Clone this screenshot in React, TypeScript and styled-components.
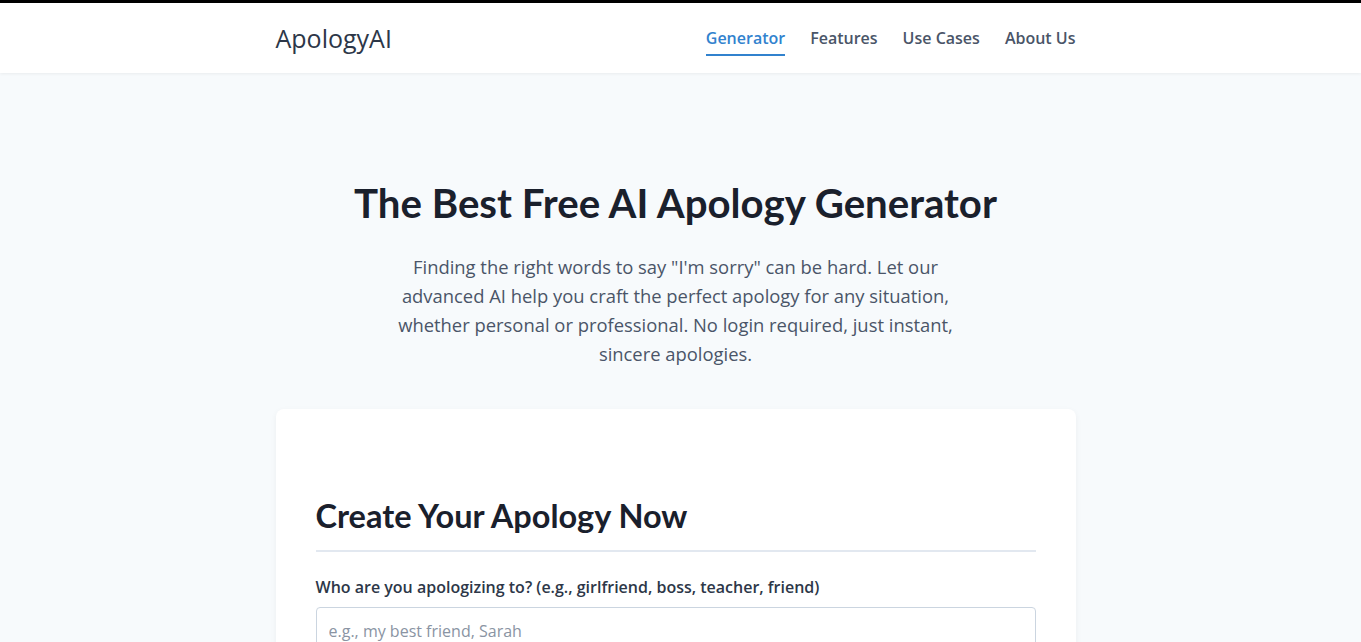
import styled, { createGlobalStyle } from "styled-components";

const GlobalStyle = createGlobalStyle`
    * { box-sizing: border-box; }
    html, body {
        margin: 0;
        padding: 0;
        background: #f7fafc;
        font-family: "Open Sans", "Liberation Sans", sans-serif;
        color: #2d3748;
    }
`;

const navItems = ["Generator", "Features", "Use Cases", "About Us"];

const App = () => {
    return (
        <Page>
            <GlobalStyle/>
            <TopStrip/>
            <Header>
                <Container>
                    <HeaderRow>
                        <Logo>ApologyAI</Logo>
                        <Nav>
                            {navItems.map((item, i) => (
                                <NavLink key={item} isActive={i === 0}>{item}</NavLink>
                            ))}
                        </Nav>
                    </HeaderRow>
                </Container>
            </Header>

            <Main>
                <Container>
                    <Hero>
                        <HeroTitle>The Best Free AI Apology Generator</HeroTitle>
                        <HeroText>
                            Finding the right words to say "I'm sorry" can be hard. Let our advanced AI help
                            you craft the perfect apology for any situation, whether personal or professional.
                            No login required, just instant, sincere apologies.
                        </HeroText>
                    </Hero>

                    <Card>
                        <CardTitle>Create Your Apology Now</CardTitle>
                        <Field>
                            <Label>Who are you apologizing to? (e.g., girlfriend, boss, teacher, friend)</Label>
                            <Input placeholder="e.g., my best friend, Sarah"/>
                        </Field>
                        <Field>
                            <Label>What happened? Describe the situation briefly.</Label>
                            <TextArea placeholder="e.g., I forgot our anniversary dinner"/>
                        </Field>
                    </Card>
                </Container>
            </Main>
        </Page>
    );
}

export default App;


const Page = styled.div`
    min-height: 1200px;
    padding-right: 10px;
`;

const TopStrip = styled.div`
    height: 3px;
    background: #000;
    margin-right: -10px;
`;

const Header = styled.header`
    background: #fff;
    box-shadow: 0 1px 3px rgba(0, 0, 0, .06);
    position: relative;
    margin-right: -10px;
    padding-right: 10px;
`;

const Container = styled.div`
    max-width: 800px;
    margin: 0 auto;
`;

const HeaderRow = styled.div`
    display: flex;
    align-items: center;
    justify-content: space-between;
    height: 70px;
`;

const Logo = styled.div`
    font-size: 25px;
    font-weight: 500;
    color: #2d3748;
`;

const Nav = styled.nav`
    display: flex;
    gap: 25px;
`;

const NavLink = styled.a<{
    isActive?: boolean,
}>`
    font-size: 16px;
    font-weight: 600;
    color: #4a5568;
    padding: 4px 0 5px;
    border-bottom: 2px solid transparent;
    cursor: pointer;
    margin-top: 2px;

    ${props => props.isActive && `
        color: #3182ce;
        border-bottom-color: #3182ce;
    `}
`;

const Main = styled.main`
    padding-top: 106px;
`;

const Hero = styled.section`
    display: flex;
    flex-direction: column;
    align-items: center;
    text-align: center;
`;

const HeroTitle = styled.h1`
    font-family: Lato, "Liberation Sans", sans-serif;
    font-size: 40.2px;
    font-weight: 700;
    line-height: 1.2;
    color: #1a202c;
    margin: 0 0 25px;
`;

const HeroText = styled.p`
    max-width: 575px;
    font-size: 18.4px;
    line-height: 29px;
    color: #4a5568;
    margin: 0 0 41px;
`;

const Card = styled.section`
    background: #fff;
    border-radius: 8px;
    box-shadow: 0 2px 6px rgba(0, 0, 0, .05);
    padding: 87px 40px 40px;
`;

const CardTitle = styled.h2`
    font-family: Lato, "Liberation Sans", sans-serif;
    font-size: 32.5px;
    font-weight: 700;
    line-height: 1.2;
    color: #1a202c;
    margin: 0 0 24px;
    padding-bottom: 15px;
    border-bottom: 2px solid #e2e8f0;
`;

const Field = styled.div`
    display: flex;
    flex-direction: column;
    gap: 9px;
    margin-bottom: 24px;
`;

const Label = styled.label`
    font-size: 16px;
    font-weight: 600;
    color: #2d3748;
`;

const Input = styled.input`
    font-family: "Open Sans", "Liberation Sans", sans-serif;
    font-size: 16px;
    padding: 12px;
    border: 1px solid #cbd5e0;
    border-radius: 4px;
    color: #2d3748;

    &::placeholder {
        color: #8a94a3;
    }
`;

const TextArea = styled.textarea`
    font-family: "Open Sans", "Liberation Sans", sans-serif;
    font-size: 16px;
    padding: 12px;
    height: 120px;
    border: 1px solid #cbd5e0;
    border-radius: 4px;
    resize: vertical;

    &::placeholder {
        color: #8a94a3;
    }
`;
